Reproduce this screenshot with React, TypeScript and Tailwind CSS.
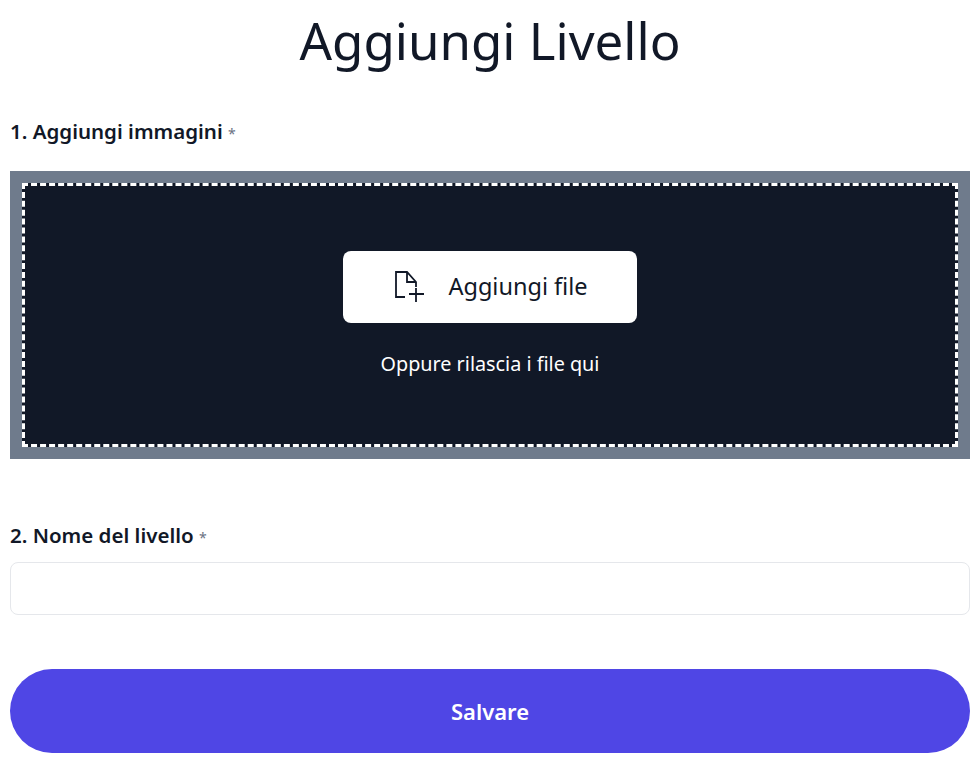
import React from 'react';

const App: React.FC = () => {
  return (
    <div className="px-[10px] text-[#111827] bg-white min-h-[768px] font-['Noto_Sans',sans-serif]">
      <h1 className="text-center text-[51px] leading-[80px] font-normal">Aggiungi Livello</h1>

      <label className="block mt-[37px] text-[20.5px] leading-[28px] font-semibold">
        1. Aggiungi immagini <span className="font-normal text-[14px] text-gray-500">*</span>
      </label>

      <div className="mt-[23px] h-[288px] bg-[#6f7b8c] p-[12px]">
        <div className="h-full bg-[#111827] border-[3px] border-dashed border-white pb-[1px] flex flex-col items-center justify-center">
          <button className="w-[294px] h-[72px] bg-white rounded-[8px] flex items-center justify-center gap-[24px] text-[23.5px]">
            <svg width="32" height="32" viewBox="0 0 32 32" fill="none" stroke="#111827" strokeWidth="1.8">
              <path d="M13 26H4V1h11l9 10v5M15 1v10h9M17 23h15M24 17v14" />
            </svg>
            Aggiungi file
          </button>
          <p className="mt-[27px] text-[19.8px] leading-[28px] text-white">Oppure rilascia i file qui</p>
        </div>
      </div>

      <label className="block mt-[62px] text-[20.5px] leading-[28px] font-semibold">
        2. Nome del livello <span className="font-normal text-[14px] text-gray-500">*</span>
      </label>

      <input className="block mt-[10px] w-full h-[53px] rounded-[8px] border border-gray-200 bg-white" />

      <button className="block mt-[54px] w-full h-[84px] rounded-full bg-[#4f46e5] text-white text-[22px] font-semibold">
        Salvare
      </button>
    </div>
  );
};

export default App;
